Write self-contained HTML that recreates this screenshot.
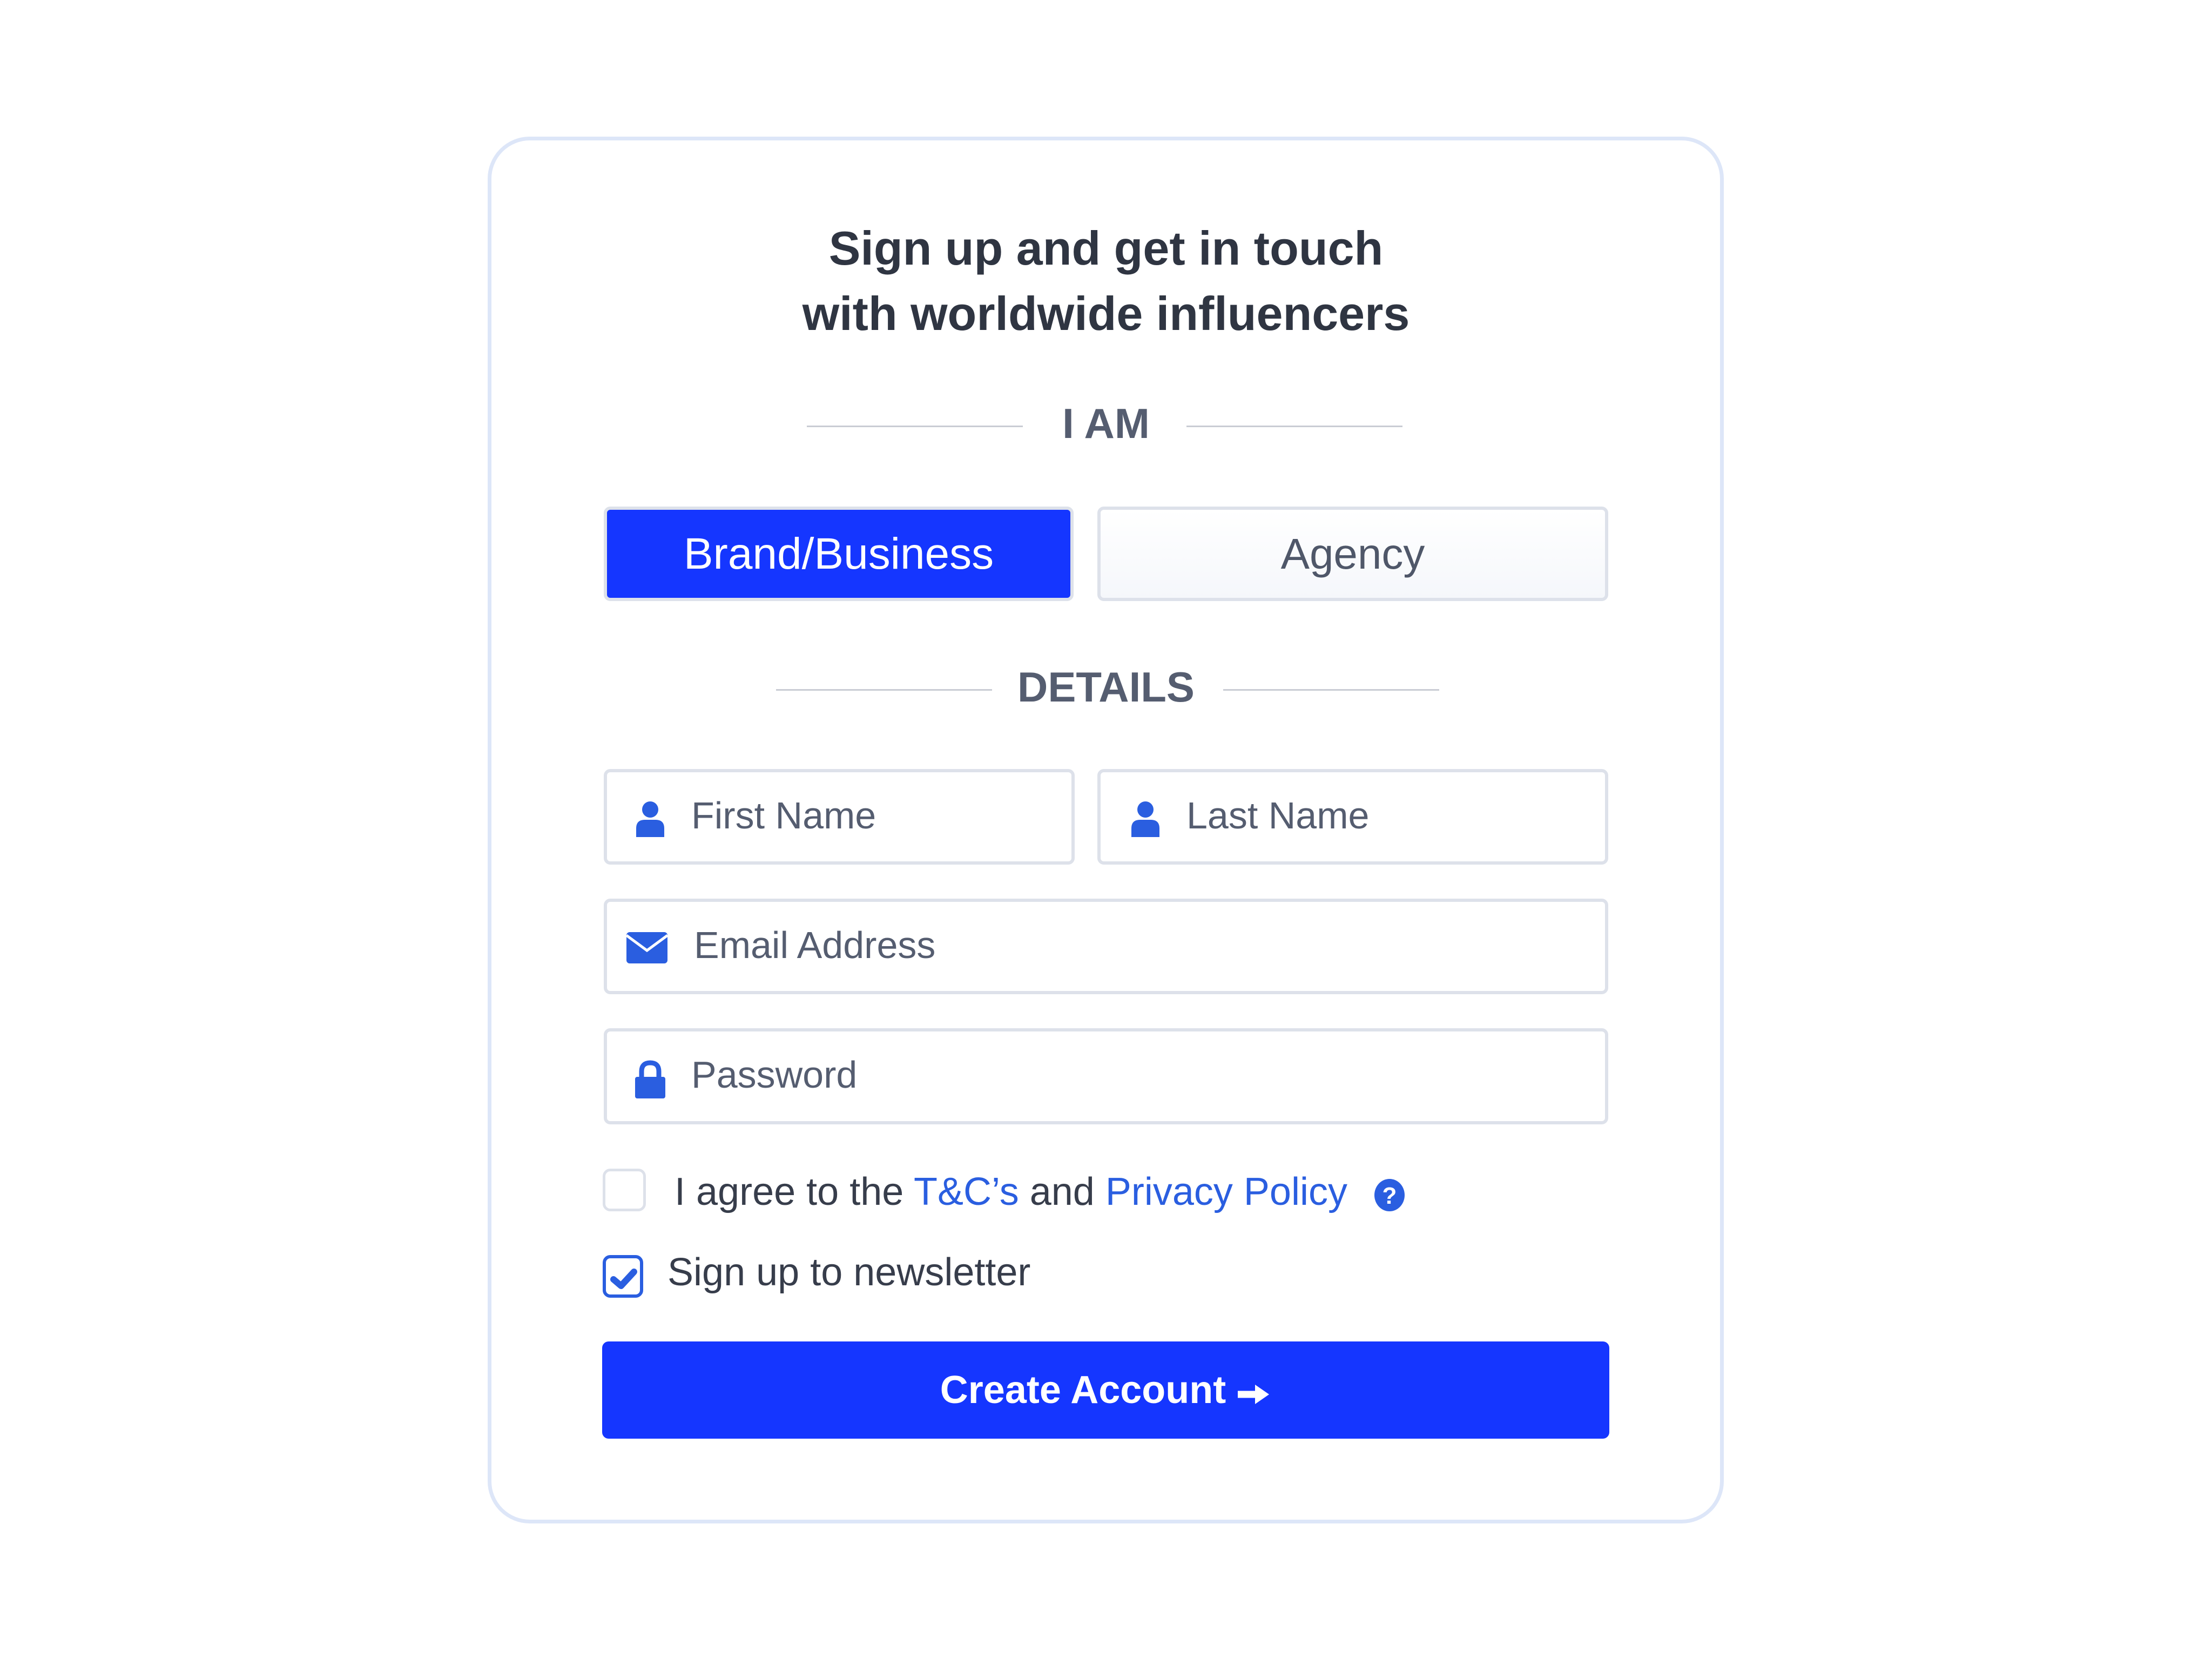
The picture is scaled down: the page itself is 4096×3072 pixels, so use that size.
<!DOCTYPE html>
<html><head><meta charset="utf-8"><style>
*{box-sizing:border-box;margin:0;padding:0}
body{width:4096px;height:3072px;background:#fff;font-family:"Liberation Sans",sans-serif;position:relative;overflow:hidden}
.a{position:absolute}
.card{left:903px;top:253px;width:2289px;height:2568px;border:7px solid #dde6f8;border-radius:78px}
.t{left:0;width:4096px;text-align:center;color:#2f3542;font-weight:bold;font-size:88px;line-height:120px}
.h{left:0;width:4096px;text-align:center;color:#555d70;font-weight:bold;font-size:78px;line-height:100px}
.ln{height:3px;background:#c9ccd4}
.box{border:6px solid #dde1ea;border-radius:12px;background:#fff}
.ph{color:#555d70;font-size:70px;line-height:80px}
.ic{fill:#2a5ee0}
</style></head><body>
<div class="a card"></div>
<div class="a t" style="top:400px">Sign up and get in touch</div>
<div class="a t" style="top:521px">with worldwide influencers</div>

<div class="a h" style="top:734px">I AM</div>
<div class="a ln" style="left:1494px;top:788px;width:400px"></div>
<div class="a ln" style="left:2197px;top:788px;width:400px"></div>

<div class="a" style="left:1118px;top:938px;width:870px;height:175px;background:#1536ff;border:6px solid #dde1ea;border-radius:12px;color:#fff;font-size:82px;line-height:163px;text-align:center">Brand/Business</div>
<div class="a box" style="left:2032px;top:938px;width:946px;height:175px;background:linear-gradient(#fff,#f5f7fb);color:#4f5769;font-size:80px;line-height:163px;text-align:center">Agency</div>

<div class="a h" style="top:1222px">DETAILS</div>
<div class="a ln" style="left:1437px;top:1276px;width:400px"></div>
<div class="a ln" style="left:2265px;top:1276px;width:400px"></div>

<div class="a box" style="left:1118px;top:1424px;width:872px;height:177px"></div>
<div class="a box" style="left:2032px;top:1424px;width:946px;height:177px"></div>
<div class="a box" style="left:1118px;top:1664px;width:1860px;height:177px"></div>
<div class="a box" style="left:1118px;top:1904px;width:1860px;height:178px"></div>

<svg class="a" style="left:1176px;top:1482px" width="56" height="68" viewBox="0 0 56 68"><circle class="ic" cx="28" cy="17" r="15"/><path class="ic" d="M2 68 V52 Q2 36 18 36 H38 Q54 36 54 52 V68 Z"/></svg>
<svg class="a" style="left:2093px;top:1482px" width="56" height="68" viewBox="0 0 56 68"><circle class="ic" cx="28" cy="17" r="15"/><path class="ic" d="M2 68 V52 Q2 36 18 36 H38 Q54 36 54 52 V68 Z"/></svg>
<div class="a ph" style="left:1280px;top:1470px">First Name</div>
<div class="a ph" style="left:2197px;top:1470px">Last Name</div>

<svg class="a" style="left:1160px;top:1726px" width="76" height="58" viewBox="0 0 76 58"><rect class="ic" x="0" y="0" width="76" height="58" rx="6"/><path d="M0 6 L38 34 L76 6" stroke="#fff" stroke-width="5" fill="none"/></svg>
<div class="a ph" style="left:1285px;top:1710px">Email Address</div>

<svg class="a" style="left:1176px;top:1962px" width="56" height="72" viewBox="0 0 56 72"><path d="M12 34 V22 Q12 6 28 6 Q44 6 44 22 V34" stroke="#2a5ee0" stroke-width="9" fill="none"/><rect class="ic" x="0" y="32" width="56" height="40" rx="4"/></svg>
<div class="a ph" style="left:1280px;top:1950px">Password</div>

<div class="a" style="left:1116px;top:2164px;width:80px;height:79px;border:5px solid #dde1ea;border-radius:14px"></div>
<div class="a" style="left:1249px;top:2167px;font-size:72px;line-height:80px;color:#373d4b">I agree to the <span style="color:#2a5ee0">T&amp;C’s</span> and <span style="color:#2a5ee0">Privacy Policy</span></div>
<svg class="a" style="left:2545px;top:2183px" width="56" height="60" viewBox="0 0 56 60"><ellipse class="ic" cx="28" cy="30" rx="28" ry="30"/><text x="28" y="46" text-anchor="middle" font-family="Liberation Sans" font-weight="bold" font-size="44" fill="#fff">?</text></svg>

<div class="a" style="left:1116px;top:2324px;width:75px;height:79px;border:6px solid #2a5ee0;border-radius:14px"></div>
<svg class="a" style="left:1130px;top:2347px" width="50" height="42" viewBox="0 0 50 42"><path d="M6 22 L20 34 L44 8" stroke="#2a5ee0" stroke-width="12" stroke-linecap="round" stroke-linejoin="round" fill="none"/></svg>
<div class="a" style="left:1236px;top:2316px;font-size:72px;line-height:80px;color:#373d4b">Sign up to newsletter</div>

<div class="a" style="left:1115px;top:2484px;width:1865px;height:180px;background:#1536ff;border-radius:12px;color:#fff;font-weight:bold;font-size:72px;line-height:180px;text-align:center">Create Account <svg width="64" height="48" viewBox="0 0 64 48" style="vertical-align:-8px"><path d="M2 24 H44" stroke="#fff" stroke-width="13"/><path d="M34 6 L60 24 L34 42 Z" fill="#fff"/></svg></div>
</body></html>
